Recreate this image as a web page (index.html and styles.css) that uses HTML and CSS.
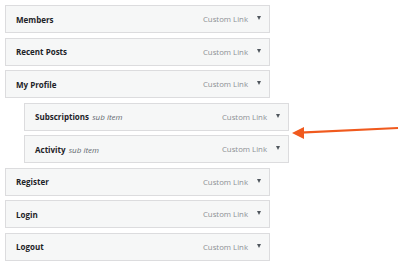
FILE: index.html
```html
<!DOCTYPE html>
<html lang="en">
<head>
    <meta charset="UTF-8">
    <meta name="viewport" content="width=device-width, initial-scale=1.0">
    <title>Menu Structure</title>
    <link rel="stylesheet" href="styles.css">
</head>
<body>
    <ul class="menu">
        <li class="menu-item">
            <span class="item-title">Members</span>
            <span class="item-type">Custom Link</span>
            <span class="item-toggle"></span>
        </li>
        <li class="menu-item">
            <span class="item-title">Recent Posts</span>
            <span class="item-type">Custom Link</span>
            <span class="item-toggle"></span>
        </li>
        <li class="menu-item">
            <span class="item-title">My Profile</span>
            <span class="item-type">Custom Link</span>
            <span class="item-toggle"></span>
        </li>
        <li class="menu-item sub">
            <span class="item-title">Subscriptions <em class="sub-label">sub item</em></span>
            <span class="item-type">Custom Link</span>
            <span class="item-toggle"></span>
        </li>
        <li class="menu-item sub">
            <span class="item-title">Activity <em class="sub-label">sub item</em></span>
            <span class="item-type">Custom Link</span>
            <span class="item-toggle"></span>
        </li>
        <li class="menu-item">
            <span class="item-title">Register</span>
            <span class="item-type">Custom Link</span>
            <span class="item-toggle"></span>
        </li>
        <li class="menu-item">
            <span class="item-title">Login</span>
            <span class="item-type">Custom Link</span>
            <span class="item-toggle"></span>
        </li>
        <li class="menu-item">
            <span class="item-title">Logout</span>
            <span class="item-type">Custom Link</span>
            <span class="item-toggle"></span>
        </li>
    </ul>

    <!-- annotation arrow pointing at the sub items -->
    <svg class="pointer" width="399" height="269" viewBox="0 0 399 269">
        <line x1="398" y1="128" x2="300" y2="132.6" stroke="#f05a1e" stroke-width="2.2"/>
        <polygon points="292,133 304,127 304,139" fill="#f05a1e"/>
    </svg>
</body>
</html>
```

FILE: styles.css
```css
body {
    margin: 0;
    background-color: #fff;
    font-family: "Open Sans", Arial, sans-serif;
    position: relative;
    height: 269px;
    overflow: hidden;
}

.menu {
    list-style: none;
    margin: 0;
    padding: 5px;
    display: flex;
    flex-direction: column;
    gap: 4.57px;
}

.menu-item {
    box-sizing: border-box;
    width: 265px;
    height: 28px;
    display: flex;
    align-items: center;
    padding: 0 8px 0 10px;
    background-color: #f6f7f7;
    border: 1px solid #dcdcde;
}

.menu-item.sub {
    margin-left: 19px;
}

.item-title {
    flex: 1;
    font-size: 8px;
    font-weight: 700;
    color: #1d2327;
}

.sub-label {
    font-weight: 400;
    color: #646970;
    margin-left: 1px;
}

.item-type {
    font-size: 7.8px;
    color: #8c8f94;
    margin-right: 9px;
}

.item-toggle {
    width: 0;
    height: 0;
    border-left: 2.5px solid transparent;
    border-right: 2.5px solid transparent;
    border-top: 4px solid #50575e;
    margin-top: -2px;
}

.pointer {
    position: absolute;
    top: 0;
    left: 0;
}
```
